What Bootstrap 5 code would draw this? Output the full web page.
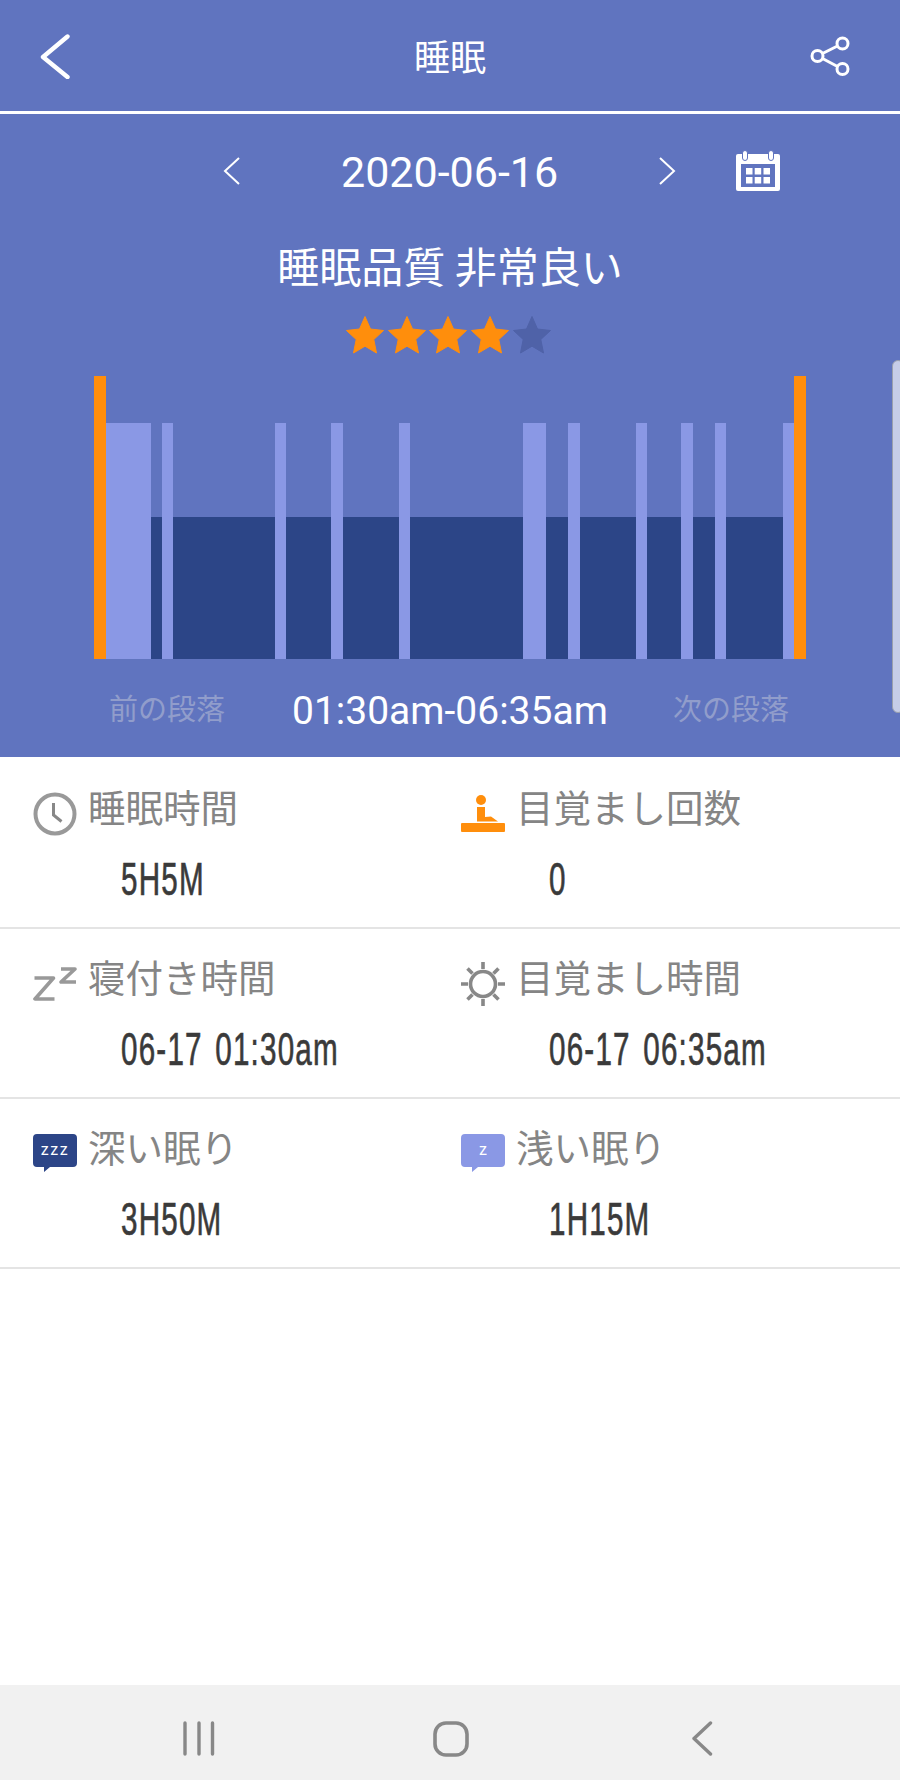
<!DOCTYPE html>
<html lang="ja">
<head>
<meta charset="UTF-8">
<meta name="viewport" content="width=device-width, initial-scale=1.0">
<title>睡眠</title>
<link href="https://cdn.jsdelivr.net/npm/bootstrap@5.3.2/dist/css/bootstrap.min.css" rel="stylesheet">
<style>
    html, body { height: 100%; margin: 0; background: #fff; }
    body { font-family: "Noto Sans CJK JP", "Noto Sans", sans-serif; overflow: hidden; }
    .app-shell { width: 900px; height: 1780px; position: relative; overflow: hidden; }
    .sleep-panel { background: #6074bf; color: #fff; height: 757px; }
    .top-bar { height: 114px; border-bottom: 3px solid #fff; padding: 0 50px 0 40px; }
    .top-title { font-size: 36px; line-height: 1; margin: -2px 0 0 18px; }
    .date-row { padding: 36px 0 0 223px; height: 77px; }
    .date-chev { margin-top: 7px; }
    .date-text { font-family: Roboto, sans-serif; font-size: 43px; line-height: 41px; margin: 2px 101px 0; width: 217px; text-align: center; white-space: nowrap; }
    .cal-icon { margin-left: 60px; }
    .quality-text { font-size: 42px; line-height: 40px; margin-top: 54px; }
    .star-row { margin-top: 30px; height: 40px; padding-left: 345px; gap: 1.7px; }
    .sleep-chart { margin: 21px 0 0 94px; width: 712px; height: 283px; }
    .end-cap { width: 11.75px; background: #ff8e0c; flex: none; }
    .seg-light { background: #8a98e5; height: 236px; }
    .seg-deep { background: #2c4587; height: 142px; }
    .range-row { margin-top: 33px; height: 40px; }
    .range-side { color: #919dcb; font-size: 29px; line-height: 30px; white-space: nowrap; }
    .range-prev { margin-left: 109px; width: 183px; }
    .range-next { margin-left: 66px; }
    .range-time { font-family: Roboto, sans-serif; font-size: 39px; line-height: 38px; width: 315px; white-space: nowrap; }
    .stat-list { padding-top: 2px; }
    .stat-line { height: 170px; border-bottom: 2px solid #e4e4e4; padding-left: 33px; }
    .stat-cell { flex: 0 0 428px; min-width: 0; }
    .stat-head { height: 44px; margin-top: 33px; }
    .stat-head svg { flex: none; }
    .stat-label { color: #858585; font-size: 37.5px; line-height: 1; margin-left: 11px; margin-top: -16px; white-space: nowrap; }
    .stat-value { display: inline-block; font-family: "Liberation Sans Narrow", "Liberation Sans", sans-serif; color: #3a3a3a; font-size: 47px; line-height: 48px; letter-spacing: 1.9px; word-spacing: 5px; -webkit-text-stroke: .7px #3a3a3a; margin: 18.5px 0 0 88px; transform: scaleX(.63); transform-origin: left center; white-space: nowrap; }
    .scroll-grip { position: absolute; left: 892px; top: 360px; width: 12px; height: 353px; background: #c6cde8; border: 1px solid #9aa0ad; border-radius: 8px; }
    .bottom-nav { position: absolute; left: 0; right: 0; top: 1685px; height: 95px; background: #f1f1f1; }
    .nav-slot { position: absolute; top: 36px; }
    .nav-menu { left: 183px; }
    .nav-home { left: 433px; }
    .nav-back { left: 691px; }
</style>
</head>
<body>
<div class="app-shell">
    <div class="sleep-panel">
        <div class="top-bar d-flex align-items-center justify-content-between">
            <svg width="32" height="46" viewBox="0 0 32 46"><polyline points="27.5,3.5 3,24 27.5,44" fill="none" stroke="#fff" stroke-width="4.4" stroke-linecap="round" stroke-linejoin="round"/></svg>
            <div class="top-title">睡眠</div>
            <svg width="40" height="40" viewBox="0 0 40 40" fill="none" stroke="#fff" stroke-width="3"><circle cx="32.5" cy="7.5" r="5.5"/><circle cx="7.5" cy="20" r="5.5"/><circle cx="32.5" cy="33" r="5.5"/><line x1="12.5" y1="17.5" x2="27.5" y2="10"/><line x1="12.5" y1="22.5" x2="27.5" y2="30.5"/></svg>
        </div>

        <div class="date-row d-flex align-items-start">
            <svg class="date-chev" width="17" height="28" viewBox="0 0 17 28"><polyline points="16,1 2,14 16,27" fill="none" stroke="#fff" stroke-width="2"/></svg>
            <div class="date-text">2020-06-16</div>
            <svg class="date-chev" width="17" height="28" viewBox="0 0 17 28"><polyline points="1,1 15,14 1,27" fill="none" stroke="#fff" stroke-width="2"/></svg>
            <svg class="cal-icon" width="44" height="41" viewBox="0 0 44 41">
                <rect y="4" width="44" height="37" rx="2" fill="#fff"/>
                <rect x="5" y="14" width="34" height="23" fill="#6074bf"/>
                <rect x="6.5" y=".5" width="5" height="10" rx="2.5" fill="#fff" stroke="#6074bf"/>
                <rect x="32.5" y=".5" width="5" height="10" rx="2.5" fill="#fff" stroke="#6074bf"/>
                <g fill="#fff"><rect x="10" y="18" width="6.5" height="6.5"/><rect x="18.7" y="18" width="6.5" height="6.5"/><rect x="27.5" y="18" width="6.5" height="6.5"/><rect x="10" y="27" width="6.5" height="6.5"/><rect x="18.7" y="27" width="6.5" height="6.5"/><rect x="27.5" y="27" width="6.5" height="6.5"/></g>
            </svg>
        </div>

        <div class="quality-text text-center">睡眠品質 非常良い</div>

        <div class="star-row d-flex">
            <svg width="40" height="40" viewBox="0 0 40 40"><polygon points="20,1.5 25.5,14 38.5,15.5 28.8,24.5 31.5,38 20,31.2 8.5,38 11.2,24.5 1.5,15.5 14.5,14" fill="#ff8e0c" stroke="#ff8e0c" stroke-linejoin="round"/></svg>
            <svg width="40" height="40" viewBox="0 0 40 40"><polygon points="20,1.5 25.5,14 38.5,15.5 28.8,24.5 31.5,38 20,31.2 8.5,38 11.2,24.5 1.5,15.5 14.5,14" fill="#ff8e0c" stroke="#ff8e0c" stroke-linejoin="round"/></svg>
            <svg width="40" height="40" viewBox="0 0 40 40"><polygon points="20,1.5 25.5,14 38.5,15.5 28.8,24.5 31.5,38 20,31.2 8.5,38 11.2,24.5 1.5,15.5 14.5,14" fill="#ff8e0c" stroke="#ff8e0c" stroke-linejoin="round"/></svg>
            <svg width="40" height="40" viewBox="0 0 40 40"><polygon points="20,1.5 25.5,14 38.5,15.5 28.8,24.5 31.5,38 20,31.2 8.5,38 11.2,24.5 1.5,15.5 14.5,14" fill="#ff8e0c" stroke="#ff8e0c" stroke-linejoin="round"/></svg>
            <svg width="40" height="40" viewBox="0 0 40 40"><polygon points="20,1.5 25.5,14 38.5,15.5 28.8,24.5 31.5,38 20,31.2 8.5,38 11.2,24.5 1.5,15.5 14.5,14" fill="#4f62a8" stroke="#4f62a8" stroke-linejoin="round"/></svg>
        </div>

        <div class="sleep-chart d-flex align-items-end">
            <div class="end-cap h-100"></div>
            <div class="seg-light" style="flex:4"></div><div class="seg-deep" style="flex:1"></div>
            <div class="seg-light" style="flex:1"></div><div class="seg-deep" style="flex:9"></div>
            <div class="seg-light" style="flex:1"></div><div class="seg-deep" style="flex:4"></div>
            <div class="seg-light" style="flex:1"></div><div class="seg-deep" style="flex:5"></div>
            <div class="seg-light" style="flex:1"></div><div class="seg-deep" style="flex:10"></div>
            <div class="seg-light" style="flex:2"></div><div class="seg-deep" style="flex:2"></div>
            <div class="seg-light" style="flex:1"></div><div class="seg-deep" style="flex:5"></div>
            <div class="seg-light" style="flex:1"></div><div class="seg-deep" style="flex:3"></div>
            <div class="seg-light" style="flex:1"></div><div class="seg-deep" style="flex:2"></div>
            <div class="seg-light" style="flex:1"></div><div class="seg-deep" style="flex:5"></div>
            <div class="seg-light" style="flex:1"></div>
            <div class="end-cap h-100"></div>
        </div>

        <div class="range-row d-flex">
            <div class="range-side range-prev">前の段落</div>
            <div class="range-time">01:30am-06:35am</div>
            <div class="range-side range-next">次の段落</div>
        </div>
    </div>

    <div class="stat-list">
        <div class="stat-line d-flex">
            <div class="stat-cell">
                <div class="stat-head d-flex align-items-center">
                    <svg width="44" height="44" viewBox="0 0 44 44" fill="none" stroke="#999" stroke-width="4"><circle cx="22" cy="22" r="19.5"/><polyline points="20.5,11 20.5,23 28.5,29.5" stroke="#888" stroke-width="3"/></svg>
                    <div class="stat-label">睡眠時間</div>
                </div>
                <div class="stat-value">5H5M</div>
            </div>
            <div class="stat-cell">
                <div class="stat-head d-flex align-items-center">
                    <svg width="44" height="44" viewBox="0 0 44 44" fill="#ff8e0c"><circle cx="20" cy="8" r="5"/><path d="M16 15h8v10l6-.5 7 5H16z"/><rect y="31" width="44" height="9" rx="1"/></svg>
                    <div class="stat-label">目覚まし回数</div>
                </div>
                <div class="stat-value">0</div>
            </div>
        </div>
        <div class="stat-line d-flex">
            <div class="stat-cell">
                <div class="stat-head d-flex align-items-center">
                    <svg width="44" height="44" viewBox="0 0 44 44" fill="none" stroke="#999" stroke-width="3.6" stroke-linejoin="round"><polyline points="1.5,16 20.5,16 2,37 21.5,37"/><polyline points="28,7 42,7 28,20 43,20"/></svg>
                    <div class="stat-label">寝付き時間</div>
                </div>
                <div class="stat-value">06-17 01:30am</div>
            </div>
            <div class="stat-cell">
                <div class="stat-head d-flex align-items-center">
                    <svg width="44" height="44" viewBox="0 0 44 44" fill="none" stroke="#888" stroke-width="3.6"><circle cx="22" cy="22" r="12.5"/><path d="M22 0v7M22 37v7M0 22h7M37 22h7M6.5 6.5l5 5M32.5 32.5l5 5M37.5 6.5l-5 5M11.5 32.5l-5 5"/></svg>
                    <div class="stat-label">目覚まし時間</div>
                </div>
                <div class="stat-value">06-17 06:35am</div>
            </div>
        </div>
        <div class="stat-line d-flex">
            <div class="stat-cell">
                <div class="stat-head d-flex align-items-center">
                    <svg width="44" height="44" viewBox="0 0 44 44"><path d="M4 2h36a4 4 0 0 1 4 4v25a4 4 0 0 1-4 4H17l-6 5v-5H4a4 4 0 0 1-4-4V6a4 4 0 0 1 4-4z" fill="#2c4587"/><text x="22" y="22.5" fill="#fff" font-family="Roboto, sans-serif" font-size="16" letter-spacing="1.5" text-anchor="middle">zzz</text></svg>
                    <div class="stat-label">深い眠り</div>
                </div>
                <div class="stat-value">3H50M</div>
            </div>
            <div class="stat-cell">
                <div class="stat-head d-flex align-items-center">
                    <svg width="44" height="44" viewBox="0 0 44 44"><path d="M4 2h36a4 4 0 0 1 4 4v25a4 4 0 0 1-4 4H17l-6 5v-5H4a4 4 0 0 1-4-4V6a4 4 0 0 1 4-4z" fill="#8a98e5"/><text x="22" y="22.5" fill="#fff" font-family="Roboto, sans-serif" font-size="16" text-anchor="middle">z</text></svg>
                    <div class="stat-label">浅い眠り</div>
                </div>
                <div class="stat-value">1H15M</div>
            </div>
        </div>
    </div>

    <div class="scroll-grip"></div>

    <div class="bottom-nav">
        <svg class="nav-slot nav-menu" width="32" height="35" viewBox="0 0 32 35" stroke="#888" stroke-width="3.4" stroke-linecap="round"><path d="M2 2v31M16 2v31M29.5 2v31"/></svg>
        <svg class="nav-slot nav-home" width="36" height="36" viewBox="0 0 36 36"><rect x="2" y="2" width="32" height="32" rx="11" fill="none" stroke="#888" stroke-width="3.6"/></svg>
        <svg class="nav-slot nav-back" width="22" height="35" viewBox="0 0 22 35"><polyline points="19.5,2 3,17.5 19.5,33" fill="none" stroke="#888" stroke-width="3.4" stroke-linecap="round" stroke-linejoin="round"/></svg>
    </div>
</div>
<script src="https://cdn.jsdelivr.net/npm/bootstrap@5.3.2/dist/js/bootstrap.bundle.min.js"></script>
</body>
</html>
